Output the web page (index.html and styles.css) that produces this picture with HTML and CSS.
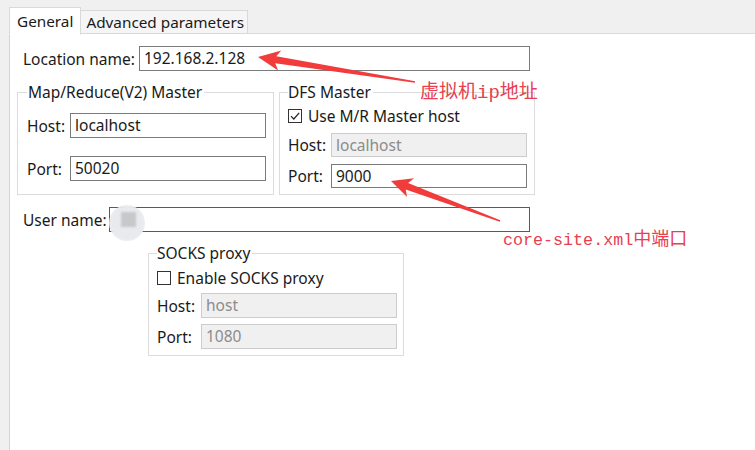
FILE: index.html
```html
<!DOCTYPE html>
<html>
<head>
<meta charset="utf-8">
<link rel="stylesheet" href="styles.css">
</head>
<body>
<div class="window">
  <div class="tabs">
    <div class="tab active">General</div>
    <div class="tab">Advanced parameters</div>
    <div class="tab-fill"></div>
  </div>
  <div class="panel">
    <div class="row top-row">
      <span class="lbl loc-lbl">Location name:</span>
      <div class="input loc-input">192.168.2.128</div>
    </div>

    <div class="groups">
      <fieldset class="group mr">
        <legend>Map/Reduce(V2) Master</legend>
        <div class="grow mr-host">
          <span class="lbl short">Host:</span>
          <div class="input gin">localhost</div>
        </div>
        <div class="grow mr-port">
          <span class="lbl short">Port:</span>
          <div class="input gin">50020</div>
        </div>
      </fieldset>
      <fieldset class="group dfs">
        <legend>DFS Master</legend>
        <div class="check-row">
          <span class="check checked">
            <svg width="12" height="12" viewBox="0 0 12 12"><path d="M2 6.2 L4.8 9 L10.2 2.8" fill="none" stroke="#222" stroke-width="1.2"/></svg>
          </span>
          <span class="check-text">Use M/R Master host</span>
        </div>
        <div class="grow dfs-row">
          <span class="lbl short">Host:</span>
          <div class="input gin disabled">localhost</div>
        </div>
        <div class="grow dfs-row">
          <span class="lbl short">Port:</span>
          <div class="input gin">9000</div>
        </div>
      </fieldset>
    </div>

    <div class="row user-row">
      <span class="lbl user-lbl">User name:</span>
      <div class="user-wrap">
        <div class="input user-input"></div>
        <div class="avatar"><div class="avatar-sq"></div></div>
      </div>
    </div>

    <fieldset class="group socks">
      <legend>SOCKS proxy</legend>
      <div class="check-row">
        <span class="check"></span>
        <span class="check-text">Enable SOCKS proxy</span>
      </div>
      <div class="grow socks-row">
        <span class="lbl short">Host:</span>
        <div class="input gin disabled">host</div>
      </div>
      <div class="grow socks-row socks-port">
        <span class="lbl short">Port:</span>
        <div class="input gin disabled">1080</div>
      </div>
    </fieldset>
  </div>
</div>

<svg class="arrows" width="755" height="450" viewBox="0 0 755 450">
  <polygon fill="#f23b3b" points="258,57 281.3,50.6 276.3,56.3 415.1,81.3 414.9,82.7 275.2,63.3 278.1,70.4"/>
  <polygon fill="#f23b3b" points="391,181 414.1,178.3 408.1,183 500.2,220.3 499.8,221.7 405.7,189.6 407.1,197.1"/>
</svg>
<div class="note note1"><span class="cjk">虚拟机</span><span class="mono">ip</span><span class="cjk">地址</span></div>
<div class="note note2"><span class="mono">core-site.xml</span><span class="cjk">中端口</span></div>
</body>
</html>
```
FILE: styles.css
```css
* { box-sizing: border-box; }
html, body {
  margin: 0;
  padding: 0;
  width: 755px;
  height: 450px;
  overflow: hidden;
  background: #f0f0f0;
  font-family: "Noto Sans", "Noto Sans CJK SC", sans-serif;
  font-size: 15.5px;
  color: #1a1a1a;
}
.window {
  display: flex;
  flex-direction: column;
  height: 450px;
}
.tabs {
  display: flex;
  align-items: flex-end;
  height: 34px;
  padding-left: 9px;
}
.tab {
  height: 24px;
  line-height: 22px;
  padding: 0 3px 0 5px;
  border: 1px solid #d9d9d9;
  background: #f5f5f5;
  font-size: 15.3px;
  margin-left: -1px;
}
.tab.active {
  height: 28px;
  line-height: 26px;
  padding: 0 7px 0 7px;
  background: #fff;
  border-bottom-color: #fff;
  margin-left: 0;
  position: relative;
  z-index: 1;
  margin-bottom: -1px;
}
.tab-fill {
  flex: 1;
  border-bottom: 1px solid #d9d9d9;
  align-self: stretch;
}
.panel {
  flex: 1;
  margin-left: 9px;
  background: #fff;
  border-left: 1px solid #d4d4d4;
  padding: 12px 0 0 7px;
}
.row {
  display: flex;
  align-items: center;
  padding-left: 6px;
}
.lbl {
  white-space: nowrap;
}
.input {
  height: 25px;
  border: 1px solid #7a7a7a;
  background: #fff;
  padding: 0 4px;
  line-height: 23px;
  white-space: nowrap;
}
.input.disabled {
  background: #f0f0f0;
  border-color: #cccccc;
  color: #8c8c8c;
}
.loc-lbl { width: 116px; }
.loc-input { width: 391px; }

.groups {
  display: flex;
  margin-top: 11px;
  gap: 5px;
}
fieldset.group {
  margin: 0;
  min-width: 0;
  border: 1px solid #dcdcdc;
}
fieldset.group legend {
  padding: 0 2px 0 0;
  line-height: 20px;
}
fieldset.mr { width: 257px; padding: 0 7px 12px 9px; }
fieldset.mr legend { padding-left: 1px; }
fieldset.dfs { width: 256px; padding: 0 6px 6px 8px; }
.grow {
  display: flex;
  align-items: center;
}
.short { width: 43px; }
.gin { width: 196px; flex: none; }
.mr-host { margin-top: 11px; }
.mr-port { margin-top: 18px; }
.check-row {
  display: flex;
  align-items: center;
  height: 20px;
  margin-top: 4px;
}
.check {
  width: 14px;
  height: 14px;
  border: 1px solid #333;
  display: inline-flex;
  align-items: center;
  justify-content: center;
  margin-right: 6px;
  background: #fff;
  flex: none;
}
.dfs-row { margin-top: 7px; }
.dfs .gin { height: 24px; line-height: 22px; }

.user-row { margin-top: 12px; }
.user-lbl { width: 86px; }
.user-wrap { position: relative; }
.user-input {
  width: 421px;
  border-color: #1f6aa5;
}
.avatar {
  position: absolute;
  left: 0;
  top: -2px;
  width: 36px;
  height: 36px;
  border-radius: 50%;
  background: radial-gradient(circle, #e8eaee 60%, rgba(240,242,246,0.5) 100%);
  filter: blur(0.5px);
  display: flex;
  align-items: center;
  justify-content: center;
}
.avatar-sq {
  width: 15px;
  height: 15px;
  background: #c8c8ca;
  margin-top: -7px;
  margin-left: 2px;
  filter: blur(0.8px);
}

fieldset.socks {
  margin: 11px 0 0 131px;
  width: 256px;
  padding: 0 5px 6px 8px;
}
fieldset.socks .short { width: 44px; }
.socks .check-row { margin-top: 5px; }
.socks-row { margin-top: 5px; }
.socks-port { margin-top: 6px; }

.arrows {
  position: absolute;
  left: 0;
  top: 0;
  pointer-events: none;
}
.note {
  position: absolute;
  color: #e8404f;
  white-space: nowrap;
  line-height: 20px;
}
.note .cjk {
  font-family: "Noto Sans CJK SC", sans-serif;
  font-size: 19px;
}
.note .mono {
  font-family: "Liberation Mono", monospace;
  font-size: 19px;
}
.note1 { left: 420px; top: 80px; }
.note2 { left: 503px; top: 227px; }
.note2 .mono { font-size: 16.7px; }
.note2 .cjk { font-size: 18px; }
```
